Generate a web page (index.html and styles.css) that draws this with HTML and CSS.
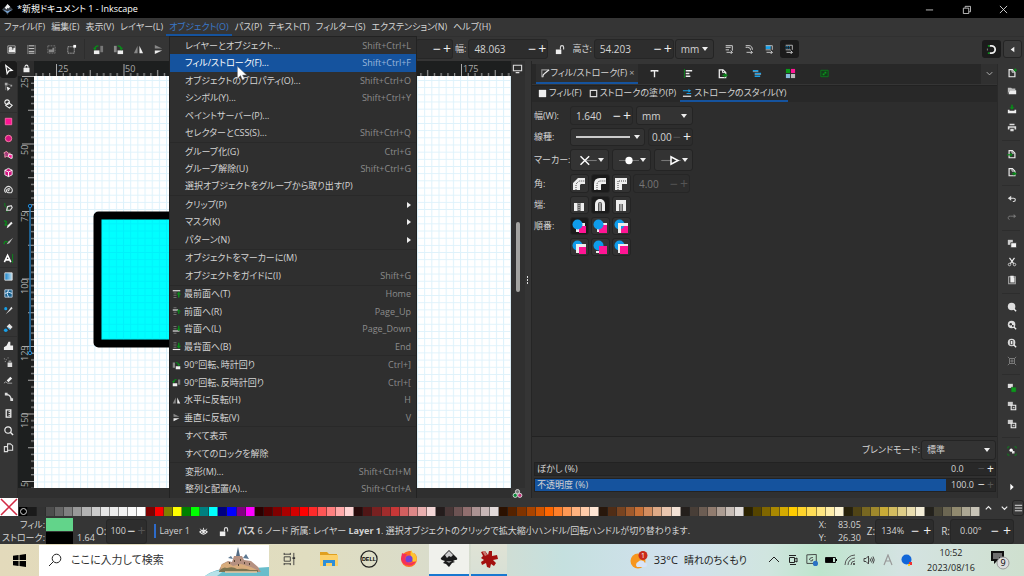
FILE: index.html
```html
<!DOCTYPE html>
<html lang="ja">
<head>
<meta charset="utf-8">
<title>*新規ドキュメント 1 - Inkscape</title>
<link rel="stylesheet" href="styles.css">
</head>
<body>
<svg class="defs" aria-hidden="true">
  <symbol id="selall" viewBox="0 0 12 12"><path d="M2 2h8v8H2z" fill="none" stroke="#aaa"/><path d="M3 6h5V4h2v5H3z" fill="#eee"/><circle cx="5" cy="5" r="2" fill="#ddd"/></symbol>
  <symbol id="sellayers" viewBox="0 0 12 12"><path d="M2 1v10M10 1v10" stroke="#888"/><path d="M3 2h6M3 5h6M3 8h6M3 10h6" stroke="#ddd"/></symbol>
  <symbol id="desel" viewBox="0 0 12 12"><path d="M2 2h8v8H2z" fill="none" stroke="#777" stroke-dasharray="2 1"/><path d="M3 6h4V4h2v5H3z" fill="#888"/></symbol>
  <symbol id="selbox" viewBox="0 0 12 12"><path d="M2 3h7v7H2z" fill="none" stroke="#ddd" stroke-dasharray="1 1"/><path d="M8 1h3v3H8z" fill="#fff"/></symbol>
  <symbol id="rotl" viewBox="0 0 12 12"><path d="M1 7h6v4H1z" fill="#eee"/><path d="M8 2h3v7H8z" fill="#777"/><path d="M2 6q0-4 4-4" fill="none" stroke="#0a8a1a" stroke-width="1.5"/><path d="M0 4h4l-2 3z" fill="#0a8a1a"/></symbol>
  <symbol id="rotr" viewBox="0 0 12 12"><path d="M5 7h6v4H5z" fill="#eee"/><path d="M1 2h3v7H1z" fill="#888"/><path d="M5 2q4 0 4 4" fill="none" stroke="#0a8a1a" stroke-width="1.5"/><path d="M7 4h4l-2 3z" fill="#0a8a1a"/></symbol>
  <symbol id="fliph" viewBox="0 0 12 12"><path d="M5 2v8H1z" fill="#888"/><path d="M7 2v8h4z" fill="#eee"/></symbol>
  <symbol id="flipv" viewBox="0 0 12 12"><path d="M2 5h8L2 1z" fill="#888"/><path d="M2 7h8l-8 4z" fill="#eee"/></symbol>
  <symbol id="top" viewBox="0 0 12 12"><path d="M1 1h10" stroke="#eee" stroke-width="1.5"/><path d="M2 4h4M2 7h4M2 10h4" stroke="#888"/><path d="M9 10V5" stroke="#0a8a1a" stroke-width="2"/><path d="M6 6h6L9 2z" fill="#0a8a1a"/></symbol>
  <symbol id="raise" viewBox="0 0 12 12"><path d="M1 4h7" stroke="#eee" stroke-width="1.5"/><path d="M2 1h4M2 7h4M2 10h4" stroke="#888"/><path d="M9 9V6" stroke="#0a8a1a" stroke-width="2"/><path d="M6 6h6L9 3z" fill="#0a8a1a"/></symbol>
  <symbol id="lower" viewBox="0 0 12 12"><path d="M1 8h9" stroke="#eee" stroke-width="1.5"/><path d="M2 2h4M2 5h4M2 11h4" stroke="#888"/><path d="M9 1v5" stroke="#0a8a1a" stroke-width="2"/><path d="M6 5h6L9 8z" fill="#0a8a1a"/></symbol>
  <symbol id="bottom" viewBox="0 0 12 12"><path d="M1 10h10" stroke="#eee" stroke-width="1.5"/><path d="M2 1h4M2 4h4M2 7h4" stroke="#888"/><path d="M9 1v5" stroke="#0a8a1a" stroke-width="2"/><path d="M6 5h6L9 9z" fill="#0a8a1a"/></symbol>
  <symbol id="arrow" viewBox="0 0 12 12"><path d="M3 1.500l7 5.500-3.500.5-2 3z" fill="#333" stroke="#fff" stroke-width="1.300"/></symbol>
  <symbol id="node" viewBox="0 0 12 12"><path d="M2 2h3v3H2zM8 4h2v2H8z" fill="#aaa"/><path d="M4 6l4 2-3 3z" fill="#eee"/><path d="M5 3l4 2M3 5v5" stroke="#777"/></symbol>
  <symbol id="builder" viewBox="0 0 12 12"><circle cx="4.500" cy="4.500" r="2.500" fill="none" stroke="#eee" stroke-width="1.200"/><path d="M6 5l4 3-3 3-4-3z" fill="none" stroke="#eee" stroke-width="1.200"/></symbol>
  <symbol id="rect" viewBox="0 0 12 12"><path d="M2.500 2.500h7v7h-7z" fill="#ff1594" stroke="#f6a"/></symbol>
  <symbol id="circ" viewBox="0 0 12 12"><circle cx="6" cy="6" r="3.500" fill="#d41480" stroke="#f8a"/></symbol>
  <symbol id="star" viewBox="0 0 12 12"><path d="M4 1.500l1.500 2 2.500 0-1.500 2 .5 2.500-3-1-2 1 0-3-1-2z" fill="#a2387a" stroke="#e9a"/><path d="M6 5h4v4H8L6 7z" fill="#ff1594" stroke="#eee"/></symbol>
  <symbol id="cube" viewBox="0 0 12 12"><path d="M6 1.500l4 2v5l-4 2-4-2v-5z" fill="#d41480" stroke="#eee"/><path d="M2 3.500l4 2 4-2M6 5.500v5" fill="none" stroke="#fff"/></symbol>
  <symbol id="spiral" viewBox="0 0 12 12"><path d="M3 9.500a4 4 0 1 1 6 0H6a2.200 2.200 0 1 1 1.800-3.500" fill="none" stroke="#ddd" stroke-width="1.200"/><circle cx="6" cy="7" r="1" fill="#ddd"/></symbol>
  <symbol id="pen" viewBox="0 0 12 12"><path d="M2 1q-1 4 2 5t0 5" fill="none" stroke="#0a8a1a"/><path d="M4 9l1-4 4-1 1 2-2 3z" fill="none" stroke="#ddd" stroke-width="1.300"/></symbol>
  <symbol id="pencil" viewBox="0 0 12 12"><path d="M1 2q4 0 2 3t2 1" fill="none" stroke="#0a8a1a" stroke-width="1.500"/><path d="M4 10l1-3 4-4 1.500 1.500L6 9z" fill="#eee"/></symbol>
  <symbol id="callig" viewBox="0 0 12 12"><path d="M1 9q1-5 4-2" fill="none" stroke="#0a8a1a" stroke-width="1.500"/><path d="M4 9l2-3 5-4-4 6z" fill="#bbb"/></symbol>
  <symbol id="typo" viewBox="0 0 12 12"><path d="M1.500 10L5 2.500 8.500 10M3 7.500h4" fill="none" stroke="#fff" stroke-width="1.700"/><path d="M10.500 1v10" stroke="#0a8a1a"/></symbol>
  <linearGradient id="blu"><stop stop-color="#1480c8"/><stop offset="1" stop-color="#bde"/></linearGradient>
  <symbol id="grad" viewBox="0 0 12 12"><path d="M2 2h8v8H2z" fill="url(#blu)" stroke="#ddd"/></symbol>
  <symbol id="mesh" viewBox="0 0 12 12"><path d="M2 2h8v8H2z" fill="#15618f" stroke="#bcd"/><path d="M6 2q-3 4 0 8M2 6q4-3 8 0" fill="none" stroke="#def"/></symbol>
  <symbol id="drop" viewBox="0 0 12 12"><circle cx="3" cy="4" r="1.700" fill="#18a0e8"/><path d="M3 10l4-5 2-3 1.500 1.500L8 6z" fill="#ddd"/></symbol>
  <symbol id="bucket" viewBox="0 0 12 12"><circle cx="3" cy="9" r="2" fill="#18a0e8"/><path d="M4 5l3-3 3.500 3.500-3 3z" fill="#e4e4e4"/><path d="M5 6l3 2" stroke="#18a0e8"/></symbol>
  <symbol id="tweak" viewBox="0 0 12 12"><path d="M1 11V8l3-2 2-4h2v4h3v5z" fill="#eee"/></symbol>
  <symbol id="spray" viewBox="0 0 12 12"><path d="M5 6h5v5H5zM6 4h3v1H6z" fill="#ddd"/><path d="M1 2h1M3 3h1M2 5h1M5 1h1" stroke="#aaa"/></symbol>
  <symbol id="eraser" viewBox="0 0 12 12"><path d="M4 7l4-4 2 2-4 4z" fill="#eee"/><path d="M1 10q2-3 4 0h5" fill="none" stroke="#aaa"/></symbol>
  <symbol id="connect" viewBox="0 0 12 12"><path d="M2 2h3v3H2zM8 8h3v3H8z" fill="#ddd"/><path d="M4 4q4 0 5 5" fill="none" stroke="#ddd" stroke-width="1.500"/></symbol>
  <symbol id="measure" viewBox="0 0 12 12"><path d="M3.500 2h5v8h-5z" fill="none" stroke="#eee" stroke-width="1.400"/><path d="M6 4h2M6 6h2M6 8h2" stroke="#eee"/></symbol>
  <symbol id="zoom" viewBox="0 0 12 12"><circle cx="5.500" cy="5.500" r="3.500" fill="none" stroke="#eee" stroke-width="1.300"/><path d="M8 8l3 3" stroke="#eee" stroke-width="1.500"/></symbol>
  <symbol id="pages" viewBox="0 0 12 12"><path d="M1.500 5H5v5.500H1.500zM5 2h3l2.500 2v5H5z" fill="none" stroke="#ddd" stroke-width="1.200"/></symbol>
  <symbol id="lock" viewBox="0 0 12 12"><path d="M2 5h8v6H2z" fill="#eee"/><path d="M4 5V3.500a2 2 0 0 1 4 0V5" fill="none" stroke="#eee" stroke-width="1.400"/></symbol>
  <symbol id="unlock" viewBox="0 0 12 12"><path d="M2 6h6v5H2z" fill="#eee"/><path d="M7 6V3.500a1.700 1.700 0 0 1 3.500 0V6" fill="none" stroke="#ddd" stroke-width="1.200"/></symbol>
  <symbol id="doc" viewBox="0 0 12 12"><path d="M2.500 2h4l3 3v5.500h-7z" fill="none" stroke="#eee" stroke-width="1.400"/><path d="M6 2v3h3" fill="none" stroke="#eee"/></symbol>
  <symbol id="docnew" viewBox="0 0 12 12"><use href="#doc"/><path d="M8 2.500h4M10 .5v4" stroke="#0a8a1a" stroke-width="1.500"/></symbol>
  <symbol id="open" viewBox="0 0 12 12"><path d="M1 10V2h4l1 1h4v2H3z" fill="#bbb"/><path d="M3 5h8v5H2z" fill="#eee"/></symbol>
  <symbol id="save" viewBox="0 0 12 12"><path d="M1 7h2v1h6V7h2v4H1z" fill="#eee"/><path d="M6 1v4" stroke="#0a8a1a" stroke-width="2"/><path d="M3 4h6L6 7z" fill="#0a8a1a"/></symbol>
  <symbol id="print" viewBox="0 0 12 12"><path d="M3 2h6v2H3zM1 5h10v4H9V7H3v2H1zM4 8h4v3H4z" fill="#ddd"/></symbol>
  <symbol id="import" viewBox="0 0 12 12"><use href="#doc"/><path d="M0 7h5" stroke="#0a8a1a" stroke-width="1.500"/><path d="M4 4.500v5l3-2.500z" fill="#0a8a1a"/></symbol>
  <symbol id="export" viewBox="0 0 12 12"><use href="#doc"/><path d="M6 8h3" stroke="#0a8a1a" stroke-width="1.500"/><path d="M8 5.500v5l4-2.500z" fill="#0a8a1a"/></symbol>
  <symbol id="undo" viewBox="0 0 12 12"><path d="M3 5h5a2 2 0 0 1 0 4H7" fill="none" stroke="#ddd" stroke-width="1.300"/><path d="M1 5l4-3v6z" fill="#ddd"/></symbol>
  <symbol id="redo" viewBox="0 0 12 12"><path d="M9 5H4a2 2 0 0 0-1 4" fill="none" stroke="#777" stroke-width="1.200"/><path d="M11 5L8 2.500v5z" fill="#777"/></symbol>
  <symbol id="copy" viewBox="0 0 12 12"><path d="M1 1h6v6H1z" fill="#ccc"/><path d="M4.500 4.500h7v6h-7z" fill="#f4f4f4" stroke="#333"/></symbol>
  <symbol id="cut" viewBox="0 0 12 12"><path d="M3 1l5 7M9 1L4 8" stroke="#eee" stroke-width="1.400"/><circle cx="3" cy="9" r="1.500" fill="none" stroke="#ddd"/><circle cx="9" cy="9" r="1.500" fill="none" stroke="#ddd"/></symbol>
  <symbol id="paste" viewBox="0 0 12 12"><path d="M2 2h8v8.500H2z" fill="none" stroke="#aaa" stroke-width="1.300"/><path d="M4 1h4v2h1v6H4z" fill="#eee"/></symbol>
  <symbol id="zsel" viewBox="0 0 12 12"><circle cx="5.500" cy="5.500" r="4.500" fill="#ddd"/><path d="M8 8l3 3" stroke="#eee" stroke-width="1.600"/></symbol>
  <symbol id="zdraw" viewBox="0 0 12 12"><use href="#zsel"/><circle cx="4.500" cy="5" r="1.500" fill="#333"/><path d="M6 6h2v2H6z" fill="#333"/></symbol>
  <symbol id="zpage" viewBox="0 0 12 12"><use href="#zsel"/><path d="M4 3h3v5H4z" fill="#eee" stroke="#333"/></symbol>
  <symbol id="zcenter" viewBox="0 0 12 12"><path d="M1 1l2 2M11 1L9 3M1 11l2-2M11 11L9 9M3 3h6v6H3zM6 4v4M4 6h4" fill="none" stroke="#888"/></symbol>
  <symbol id="dup" viewBox="0 0 12 12"><path d="M1 1h6v5H1z" fill="#ddd"/><path d="M5 5h6v6H5z" fill="#0a9a1a" stroke="#333" stroke-width=".5"/></symbol>
  <symbol id="clone" viewBox="0 0 12 12"><path d="M1 1h6v5H1z" fill="#ccc"/><path d="M5 5h5.500v5.500H5z" fill="#444" stroke="#eee" stroke-width="1.300"/><path d="M7 8h2" stroke="#fff"/></symbol>
  <symbol id="group" viewBox="0 0 12 12"><path d="M1 3V1h2M9 1h2v2M1 9v2h2M9 11h2V9" fill="none" stroke="#0a8a1a"/><circle cx="5" cy="5" r="2" fill="#fff"/><path d="M6 6h3v3H6z" fill="#ddd"/></symbol>
  <symbol id="scale1" viewBox="0 0 12 12"><path d="M2 2h8v6M2 4h6M2 7h4" fill="none" stroke="#ccc" stroke-width="1.200"/><path d="M3 10h7M8 8l2 2-2 2" stroke="#ddd" fill="none"/></symbol>
  <symbol id="scale2" viewBox="0 0 12 12"><path d="M2 2h4q4 0 4 5M2 4h2q4 0 4 3" fill="none" stroke="#ccc" stroke-width="1.200"/><path d="M3 10h7M8 8l2 2-2 2" stroke="#ddd" fill="none"/></symbol>
  <symbol id="scale3" viewBox="0 0 12 12"><path d="M2 2h6v4H2z" fill="#18a0e8"/><path d="M2 2h8v5M2 7h6" stroke="#ccc" fill="none"/><path d="M3 10h7M8 8l2 2-2 2" stroke="#ddd" fill="none"/></symbol>
  <symbol id="scale4" viewBox="0 0 12 12"><path d="M2 3h6M2 5h6" stroke="#18a0e8" stroke-dasharray="1 1"/><path d="M2 1.500h8V7M2 7h6" stroke="#ccc" fill="none"/><path d="M3 10h7M8 8l2 2-2 2" stroke="#ddd" fill="none"/></symbol>
  <symbol id="snap" viewBox="0 0 12 12"><path d="M4 2h2a4 4 0 0 1 0 8H4" fill="none" stroke="#eee" stroke-width="2"/><path d="M2 1h2v2H2zM2 9h2v2H2z" fill="#0a8a1a"/><path d="M1 5h1v2H1z" fill="#888"/></symbol>
  <symbol id="fillstroke" viewBox="0 0 12 12"><path d="M2 10V2h7" fill="none" stroke="#999" stroke-width="1.200"/><path d="M3 10q0-3 2-4l5-4" fill="none" stroke="#eee" stroke-width="1.300"/></symbol>
  <symbol id="tee" viewBox="0 0 12 12"><path d="M2.500 4V3h7v1M6 3v7" fill="none" stroke="#eee" stroke-width="1.500"/></symbol>
  <symbol id="align" viewBox="0 0 12 12"><path d="M1.500 1v10" stroke="#0a8a1a"/><path d="M3 3h7M3 6h4M3 9h5" stroke="#eee" stroke-width="1.700"/></symbol>
  <symbol id="layers" viewBox="0 0 12 12"><path d="M2 3h6M4 6h7M4 9h6" stroke="#18a0e8" stroke-width="1.500"/><path d="M2 4h6M4 7h7" stroke="#ccc" stroke-width=".6"/></symbol>
  <symbol id="swat" viewBox="0 0 12 12"><path d="M1 1h4.500v4.500H1z" fill="#0a9a1a"/><path d="M6.500 1H11v4.500H6.500z" fill="#ff1594"/><path d="M1 6.500h4.500V11H1z" fill="#8bd"/><path d="M6.500 6.500H11V11H6.500z" fill="#bbb"/></symbol>
  <symbol id="trace" viewBox="0 0 12 12"><path d="M2 2.500h8v7H2z" fill="#143a1c" stroke="#0a7a1a"/><path d="M4 6h2v2H4zM6 4h2v2H6z" fill="#0a9a1a"/></symbol>
  <symbol id="ststyle" viewBox="0 0 12 12"><path d="M1 3h7M5 6h5" stroke="#18a0e8" stroke-width="1.300"/><path d="M7 1l3 2-3 2z" fill="#18a0e8"/><path d="M1 9h9" stroke="#eee" stroke-width="1.300"/></symbol>
  <symbol id="joinb" viewBox="0 0 14 14"><path d="M1 13V6l5-5h7v6H9L8 8v5z" fill="#eee"/><path d="M4 13V7l3-3h6" fill="none" stroke="#444" stroke-dasharray="1 1"/></symbol>
  <symbol id="joinr" viewBox="0 0 14 14"><path d="M1 13V7q0-6 6-6h6v6H9Q8 7 8 8v5z" fill="#eee"/><path d="M4 13V8q0-4 4-4h5" fill="none" stroke="#444" stroke-dasharray="1 1"/></symbol>
  <symbol id="joinm" viewBox="0 0 14 14"><path d="M1 13V1h12v6H8v6z" fill="#eee"/><path d="M4 13V4h9" fill="none" stroke="#444" stroke-dasharray="1 1"/></symbol>
  <symbol id="capb" viewBox="0 0 14 14"><path d="M2 5h3v8H2zM9 5h3v8H9z" fill="#eee"/><path d="M5 5h4v8H5z" fill="#999"/><path d="M7 4v9" stroke="#222" stroke-dasharray="1 1"/></symbol>
  <symbol id="capr" viewBox="0 0 14 14"><path d="M2 13V6a5 5 0 0 1 10 0v7z" fill="#eee"/><path d="M5 13V6a2 2 0 0 1 4 0v7z" fill="#555"/><path d="M7 5v8" stroke="#eee"/></symbol>
  <symbol id="caps" viewBox="0 0 14 14"><path d="M2 13V2h10v11z" fill="#eee"/><path d="M5 13V6h4v7z" fill="#666"/><path d="M7 5v8" stroke="#ddd"/></symbol>
  <symbol id="o1" viewBox="0 0 14 14"><path d="M9 4h4v4H9zM4 9h4v4H4z" fill="#eee"/><path d="M7 7h7v7H7z" fill="#ff1594"/><circle cx="5.500" cy="5.500" r="5" fill="#0f9bea"/></symbol>
  <symbol id="o2" viewBox="0 0 14 14"><path d="M4 4h10v9H4z" fill="#eee"/><path d="M6 6h8v8H6z" fill="#ff1594"/><circle cx="5.500" cy="5.500" r="5" fill="#0f9bea"/></symbol>
  <symbol id="o3" viewBox="0 0 14 14"><path d="M7 7h7v7H7z" fill="#ff1594"/><circle cx="5.500" cy="5.500" r="5" fill="#0f9bea"/><path d="M4 4h10v3H7v7H4z" fill="#eee"/></symbol>
  <symbol id="o4" viewBox="0 0 14 14"><circle cx="5.500" cy="5.500" r="5" fill="#0f9bea"/><path d="M4 4h10v9H4z" fill="#eee"/><path d="M7 7h7v7H7z" fill="#ff1594"/></symbol>
  <symbol id="o5" viewBox="0 0 14 14"><circle cx="5.500" cy="5.500" r="5" fill="#0f9bea"/><path d="M3 11h3v2H3z" fill="#eee"/><path d="M6 6h8v8H6z" fill="#ff1594"/></symbol>
  <symbol id="o6" viewBox="0 0 14 14"><circle cx="5.500" cy="5.500" r="5" fill="#0f9bea"/><path d="M4 4h10v9H4z" fill="#eee"/><path d="M6 6h8v8H6z" fill="#ff1594"/></symbol>
</svg>

<header class="titlebar">
  <svg class="logo" viewBox="0 0 12 12"><path d="M6 0l6 6-2 2-2 0-2 4-2-3-2-1-2-2z" fill="#3a4048"/><path d="M6 0l3 3-2 2-1-1-1 2-2-2z" fill="#eee"/><path d="M1 6l5 2 5-2-5 4z" fill="#79a7d8"/></svg>
  <h1>*新規ドキュメント 1 - Inkscape</h1>
  <div class="winbtns">
    <button aria-label="最小化"><svg viewBox="0 0 10 10"><path d="M1 5.500h8" stroke="#ccc"/></svg></button>
    <button aria-label="元に戻す"><svg viewBox="0 0 10 10"><path d="M1.500 3.500h6v6h-6zM3.500 3V1.500h6v6H8" fill="none" stroke="#ccc"/></svg></button>
    <button aria-label="閉じる"><svg viewBox="0 0 10 10"><path d="M1 1l8 8M9 1L1 9" stroke="#ddd"/></svg></button>
  </div>
</header>

<nav class="menubar">
  <button>ファイル(F)</button><button>編集(E)</button><button>表示(V)</button><button>レイヤー(L)</button><button class="open">オブジェクト(O)</button><button>パス(P)</button><button>テキスト(T)</button><button>フィルター(S)</button><button>エクステンション(N)</button><button>ヘルプ(H)</button>
</nav>

<div class="workspace">
  <div class="toolbar">
    <div class="tb-left">
      <button aria-label="すべて選択"><svg><use href="#selall"/></svg></button><button aria-label="全レイヤー選択"><svg><use href="#sellayers"/></svg></button><button aria-label="選択解除"><svg><use href="#desel"/></svg></button><button aria-label="選択ボックス"><svg><use href="#selbox"/></svg></button>
      <i class="vsep"></i>
      <button aria-label="反時計回り"><svg><use href="#rotl"/></svg></button><button aria-label="時計回り"><svg><use href="#rotr"/></svg></button><button aria-label="水平反転"><svg><use href="#fliph"/></svg></button><button aria-label="垂直反転"><svg><use href="#flipv"/></svg></button>
    </div>
    <span class="spin tail"><button>−</button><button>+</button></span>
    <label for="w">幅:</label><span class="spin dim"><input id="w" value="48.063"><button>−</button><button>+</button></span>
    <button class="mid" aria-label="縦横比"><svg><use href="#unlock"/></svg></button>
    <label for="h">高さ:</label><span class="spin dim"><input id="h" value="54.203"><button>−</button><button>+</button></span>
    <span class="drop unit"><select aria-label="単位"><option>mm</option></select></span>
    <div class="scales"><button aria-label="線幅"><svg><use href="#scale1"/></svg></button><button aria-label="角丸"><svg><use href="#scale2"/></svg></button><button aria-label="グラデーション"><svg><use href="#scale3"/></svg></button><button class="on" aria-label="パターン"><svg><use href="#scale4"/></svg></button></div>
    <div class="tb-right"><button class="on" aria-label="スナップ"><svg><use href="#snap"/></svg></button><button class="raised" aria-label="スナップ設定"><svg viewBox="0 0 12 12"><path d="M8 3v6L4 6z" fill="#eee"/></svg></button></div>
  </div>

  <main class="main">
    <aside class="toolbox">
      <button class="on" aria-label="選択"><svg><use href="#arrow"/></svg></button><button aria-label="ノード"><svg><use href="#node"/></svg></button><button aria-label="シェイプビルダー"><svg><use href="#builder"/></svg></button><i></i>
      <button aria-label="矩形"><svg><use href="#rect"/></svg></button><button aria-label="円"><svg><use href="#circ"/></svg></button><button aria-label="星形"><svg><use href="#star"/></svg></button><button aria-label="3Dボックス"><svg><use href="#cube"/></svg></button><button aria-label="らせん"><svg><use href="#spiral"/></svg></button><i></i>
      <button aria-label="ペン"><svg><use href="#pen"/></svg></button><button aria-label="鉛筆"><svg><use href="#pencil"/></svg></button><button aria-label="カリグラフィ"><svg><use href="#callig"/></svg></button><button aria-label="テキスト"><svg><use href="#typo"/></svg></button><i></i>
      <button aria-label="グラデーション"><svg><use href="#grad"/></svg></button><button aria-label="メッシュ"><svg><use href="#mesh"/></svg></button><button aria-label="スポイト"><svg><use href="#drop"/></svg></button><button aria-label="塗りつぶし"><svg><use href="#bucket"/></svg></button><i></i>
      <button aria-label="微調整"><svg><use href="#tweak"/></svg></button><button aria-label="スプレー"><svg><use href="#spray"/></svg></button><button aria-label="消しゴム"><svg><use href="#eraser"/></svg></button><button aria-label="コネクター"><svg><use href="#connect"/></svg></button>
      <button aria-label="計測"><svg><use href="#measure"/></svg></button><button aria-label="ズーム"><svg><use href="#zoom"/></svg></button><button aria-label="ページ"><svg><use href="#pages"/></svg></button>
    </aside>

    <section class="editor">
      <button class="guide-lock" aria-label="ガイドをロック"><svg><use href="#lock"/></svg></button>
      <svg class="ruler-h" aria-hidden="true">
        <defs><pattern id="th" width="67.500" height="15" x="22" patternUnits="userSpaceOnUse"><path d="M.5 3v12M34.200 9v6M7.200 12v3M14 12v3M20.700 12v3M27.500 12v3M41 12v3M47.700 12v3M54.500 12v3M61.200 12v3" stroke="#aaa"/></pattern></defs>
        <rect width="100%" height="100%" fill="url(#th)"/>
        <text x="24" y="11">25</text><text x="91" y="11">50</text><text x="429" y="11">175</text>
      </svg>
      <button class="display" aria-label="表示モード"><svg viewBox="0 0 12 12"><path d="M1.500 2.500h9v6h-9zM4 10.500h4" fill="none" stroke="#ddd" stroke-width="1.200"/></svg></button>
      <svg class="ruler-v" aria-hidden="true">
        <defs><pattern id="tv" width="16" height="67.500" patternUnits="userSpaceOnUse"><path d="M4 .5h12M10 34.200h6M13 7.200h3M13 14h3M13 20.700h3M13 27.500h3M13 41h3M13 47.700h3M13 54.500h3M13 61.200h3" stroke="#aaa"/></pattern></defs>
        <rect width="100%" height="100%" fill="url(#tv)"/>
        <g><text transform="translate(10 12) rotate(-90)">25</text><text transform="translate(10 79) rotate(-90)">50</text><text transform="translate(10 146) rotate(-90)">75</text><text transform="translate(10 218) rotate(-90)">100</text><text transform="translate(10 285) rotate(-90)">125</text><text transform="translate(10 352) rotate(-90)">150</text><text transform="translate(10 411) rotate(-90)">5</text></g>
        <path d="M12 131v147" stroke="#1f79b8" stroke-width="1.500"/><circle cx="12" cy="130" r="1.700" fill="#123" stroke="#1f8ad8"/><circle cx="12" cy="277" r="1.700" fill="#123" stroke="#1f8ad8"/>
      </svg>
      <svg class="canvas" aria-label="キャンバス">
        <defs><pattern id="grid" width="7.170" height="7.170" x="3" y="4" patternUnits="userSpaceOnUse"><path d="M0 .5h7.200M.5 0v7.200" stroke="#0098e0" stroke-opacity=".13"/></pattern></defs>
        <rect width="100%" height="100%" fill="#fff"/>
        <rect width="100%" height="100%" fill="url(#grid)"/>
        <rect x="63.500" y="139.500" width="120" height="128" rx="1" fill="#0ff" stroke="#000" stroke-width="8" stroke-linejoin="round"/>
        <rect x="67" y="143" width="113" height="121" fill="url(#grid)"/>
      </svg>
      <div class="vscroll"><i></i></div>
      <div class="hscroll"></div>
      <button class="cms" aria-label="カラー管理"><svg viewBox="0 0 12 12"><circle cx="6" cy="4" r="2.300" fill="#777" stroke="#ddd"/><circle cx="3.500" cy="8" r="2.300" fill="#0a8a3a" stroke="#ddd"/><circle cx="8.500" cy="8" r="2.300" fill="#c2307a" stroke="#ddd"/></svg></button>
    </section>

    <div class="splitter"><i></i><i></i><i></i></div>

    <section class="dock">
      <div class="tabs">
        <button class="active"><svg><use href="#fillstroke"/></svg>フィル/ストローク(F)<b>×</b></button>
        <button aria-label="テキスト"><svg><use href="#tee"/></svg></button><button aria-label="整列"><svg><use href="#align"/></svg></button><button aria-label="書き出し"><svg><use href="#export"/></svg></button><button aria-label="レイヤー"><svg><use href="#layers"/></svg></button><button aria-label="スウォッチ"><svg><use href="#swat"/></svg></button><button aria-label="トレース"><svg><use href="#trace"/></svg></button>
        <button class="more" aria-label="その他"><svg viewBox="0 0 12 12"><path d="M3 4.500l3 3 3-3" fill="none" stroke="#bbb"/></svg></button>
      </div>
      <div class="subtabs">
        <button><svg viewBox="0 0 12 12"><path d="M2 2h8v8H2z" fill="#eee"/></svg>フィル(F)</button>
        <button><svg viewBox="0 0 12 12"><path d="M2.500 2.500h7v7h-7z" fill="none" stroke="#ddd" stroke-width="1.300"/></svg>ストロークの塗り(P)</button>
        <button class="active"><svg><use href="#ststyle"/></svg>ストロークのスタイル(Y)</button>
      </div>
      <form class="stroke">
        <label for="sw">幅(W):</label>
        <div><span class="spin sw"><input id="sw" value="1.640"><button type="button">−</button><button type="button">+</button></span><span class="drop su"><select aria-label="線幅の単位"><option>mm</option></select></span></div>
        <span>線種:</span>
        <div><button type="button" class="combo dash" aria-label="線種"><svg viewBox="0 0 54 8"><path d="M0 4h54" stroke="#fff" stroke-width="1.300"/></svg></button><span class="spin so"><input aria-label="オフセット" value="0.00"><button type="button" disabled>−</button><button type="button">+</button></span></div>
        <span>マーカー:</span>
        <div class="markers"><button type="button" class="combo" aria-label="始点マーカー"><svg viewBox="0 0 18 12"><path d="M8 6h10" stroke="#777"/><path d="M3 2l8 8M11 2l-8 8" stroke="#fff" stroke-width="1.300"/></svg></button><button type="button" class="combo" aria-label="中間マーカー"><svg viewBox="0 0 22 12"><path d="M0 6h22" stroke="#777"/><circle cx="11" cy="6" r="4" fill="#fff"/></svg></button><button type="button" class="combo" aria-label="終点マーカー"><svg viewBox="0 0 18 12"><path d="M0 6h18" stroke="#777"/><path d="M9 2.500v7L15.500 6z" fill="#2d2d2d" stroke="#fff" stroke-width="1.400"/></svg></button></div>
        <span>角:</span>
        <div class="opts"><button type="button" aria-label="ベベル"><svg><use href="#joinb"/></svg></button><button type="button" class="on" aria-label="丸"><svg><use href="#joinr"/></svg></button><button type="button" aria-label="留め継ぎ"><svg><use href="#joinm"/></svg></button><span class="spin off"><input aria-label="マイター上限" value="4.00" disabled><button type="button" disabled>−</button><button type="button" disabled>+</button></span></div>
        <span>端:</span>
        <div class="opts"><button type="button" aria-label="バット"><svg><use href="#capb"/></svg></button><button type="button" class="on" aria-label="丸型"><svg><use href="#capr"/></svg></button><button type="button" aria-label="四角"><svg><use href="#caps"/></svg></button></div>
        <span>順番:</span>
        <div class="opts"><button type="button" class="on" aria-label="順番1"><svg><use href="#o1"/></svg></button><button type="button" aria-label="順番2"><svg><use href="#o2"/></svg></button><button type="button" aria-label="順番3"><svg><use href="#o3"/></svg></button></div>
        <span></span>
        <div class="opts"><button type="button" aria-label="順番4"><svg><use href="#o4"/></svg></button><button type="button" aria-label="順番5"><svg><use href="#o5"/></svg></button><button type="button" aria-label="順番6"><svg><use href="#o6"/></svg></button></div>
      </form>
      <div class="compose">
        <div class="blend"><label for="bm">ブレンドモード:</label><span class="drop"><select id="bm"><option>標準</option></select></span></div>
        <div class="bar"><label for="blur">ぼかし (%)</label><input id="blur" value="0.0"><button disabled>−</button><button>+</button></div>
        <div class="bar full"><label for="opa">不透明度 (%)</label><input id="opa" value="100.0"><button>−</button><button disabled>+</button></div>
      </div>
    </section>

    <aside class="commands">
      <button aria-label="新規"><svg><use href="#docnew"/></svg></button><button aria-label="開く"><svg><use href="#open"/></svg></button><button aria-label="保存"><svg><use href="#save"/></svg></button><button aria-label="印刷"><svg><use href="#print"/></svg></button><i></i>
      <button aria-label="インポート"><svg><use href="#import"/></svg></button><button aria-label="エクスポート"><svg><use href="#export"/></svg></button><i></i>
      <button aria-label="元に戻す"><svg><use href="#undo"/></svg></button><button aria-label="やり直す"><svg><use href="#redo"/></svg></button><i></i>
      <button aria-label="コピー"><svg><use href="#copy"/></svg></button><button aria-label="切り取り"><svg><use href="#cut"/></svg></button><button aria-label="貼り付け"><svg><use href="#paste"/></svg></button><i></i>
      <button aria-label="選択ズーム"><svg><use href="#zsel"/></svg></button><button aria-label="描画ズーム"><svg><use href="#zdraw"/></svg></button><button aria-label="ページズーム"><svg><use href="#zpage"/></svg></button><button aria-label="中央"><svg><use href="#zcenter"/></svg></button><i></i>
      <button aria-label="複製"><svg><use href="#dup"/></svg></button><button aria-label="クローン"><svg><use href="#clone"/></svg></button><button aria-label="リンク解除"><svg><use href="#clone"/></svg></button><i></i>
      <button aria-label="グループ化"><svg><use href="#group"/></svg></button>
      <button class="expand" aria-label="さらに表示"><svg viewBox="0 0 12 12"><path d="M4 2v8l4-4z" fill="#fff"/></svg></button>
    </aside>
  </main>

  <div class="popup" role="menu">
    <button>レイヤーとオブジェクト...<kbd>Shift+Ctrl+L</kbd></button>
    <button class="hover">フィル/ストローク(F)...<kbd>Shift+Ctrl+F</kbd></button>
    <button>オブジェクトのプロパティ(O)...<kbd>Shift+Ctrl+O</kbd></button>
    <button>シンボル(Y)...<kbd>Shift+Ctrl+Y</kbd></button>
    <button>ペイントサーバー(P)...</button>
    <button>セレクターとCSS(S)...<kbd>Shift+Ctrl+Q</kbd></button>
    <hr>
    <button>グループ化(G)<kbd>Ctrl+G</kbd></button>
    <button>グループ解除(U)<kbd>Shift+Ctrl+G</kbd></button>
    <button>選択オブジェクトをグループから取り出す(P)</button>
    <hr>
    <button class="sub">クリップ(P)</button>
    <button class="sub">マスク(K)</button>
    <button class="sub">パターン(N)</button>
    <hr>
    <button>オブジェクトをマーカーに(M)</button>
    <button>オブジェクトをガイドに(I)<kbd>Shift+G</kbd></button>
    <hr>
    <button class="ic"><svg><use href="#top"/></svg>最前面へ(T)<kbd>Home</kbd></button>
    <button class="ic"><svg><use href="#raise"/></svg>前面へ(R)<kbd>Page_Up</kbd></button>
    <button class="ic"><svg><use href="#lower"/></svg>背面へ(L)<kbd>Page_Down</kbd></button>
    <button class="ic"><svg><use href="#bottom"/></svg>最背面へ(B)<kbd>End</kbd></button>
    <hr>
    <button class="ic"><svg><use href="#rotr"/></svg>90°回転、時計回り<kbd>Ctrl+]</kbd></button>
    <button class="ic"><svg><use href="#rotl"/></svg>90°回転、反時計回り<kbd>Ctrl+[</kbd></button>
    <button class="ic"><svg><use href="#fliph"/></svg>水平に反転(H)<kbd>H</kbd></button>
    <button class="ic"><svg><use href="#flipv"/></svg>垂直に反転(V)<kbd>V</kbd></button>
    <hr>
    <button>すべて表示</button>
    <button>すべてのロックを解除</button>
    <hr>
    <button>変形(M)...<kbd>Shift+Ctrl+M</kbd></button>
    <button>整列と配置(A)...<kbd>Shift+Ctrl+A</kbd></button>
  </div>
  <svg class="cursor" viewBox="0 0 10 16" aria-hidden="true"><path d="M.5.5v12l3-3 2 4.500 2-1-2-4H9.500z" fill="#fff" stroke="#888" stroke-width=".5"/></svg>
</div>

<div class="palette">
  <button class="none" aria-label="なし"><svg viewBox="0 0 18 18"><path d="M1 1l16 16M17 1L1 17" stroke="#d22b45" stroke-width="1.500"/></svg></button>
  <div class="swatches" id="swatches"></div>
  <div class="palbtns"><button aria-label="上へ"><svg viewBox="0 0 12 12"><path d="M3 7l3-3 3 3" fill="none" stroke="#eee" stroke-width="1.300"/></svg></button><button aria-label="下へ"><svg viewBox="0 0 12 12"><path d="M3 4l3 3 3-3" fill="none" stroke="#eee" stroke-width="1.300"/></svg></button><button class="raised" aria-label="パレット"><svg viewBox="0 0 12 12"><path d="M2 2.500h8M2 5.500h8M2 8.500h8" stroke="#eee"/></svg></button></div>
</div>

<footer class="status">
  <div class="style-lab"><span>フィル:</span><span>ストローク:</span></div>
  <div class="style-sw"><i class="f"></i><i class="s"></i></div>
  <span class="width">1.64</span>
  <label for="op">O:</label><span class="spin o"><input id="op" value="100"><button>−</button><button disabled>+</button></span>
  <button class="layer">Layer 1</button>
  <button aria-label="表示"><svg viewBox="0 0 12 12"><path d="M2 6.500q4-4 8 0-4 5-8 0z" fill="none" stroke="#eee" stroke-width="1.200"/><circle cx="6" cy="6.500" r="1.500" fill="#eee"/><path d="M2.500 3l1 1.500M6 2v2M9.500 3l-1 1.500" stroke="#ddd"/></svg></button>
  <button aria-label="ロック"><svg><use href="#unlock"/></svg></button>
  <p><b>パス</b> 6 ノード 所属: レイヤー <b>Layer 1</b>. 選択オブジェクトのクリックで拡大縮小ハンドル/回転ハンドルが切り替わります.</p>
  <dl><dt>X:</dt><dd>83.05</dd><dt>Y:</dt><dd>26.30</dd></dl>
  <label for="z">Z:</label><span class="spin z"><input id="z" value="134%"><button>−</button><button>+</button></span>
  <label for="r" class="rl">R:</label><span class="spin r"><input id="r" value="0.00°"><button>−</button><button>+</button></span>
</footer>

<div class="taskbar">
  <button class="start" aria-label="スタート"><svg viewBox="0 0 14 14"><path d="M0 2l6-1v5.500H0zM7 1l7-1v6.500H7zM0 7.500h6V13l-6-1zM7 7.500h7V14l-7-1z"/></svg></button>
  <label class="search"><svg class="mag" viewBox="0 0 14 14"><circle cx="8.500" cy="5.500" r="4.300" fill="none" stroke="#222"/><path d="M5.500 8.500L1 13" stroke="#222"/></svg><input placeholder="ここに入力して検索" aria-label="検索">
    <svg class="art" viewBox="0 0 64 31"><path d="M0 31q14-10 34-7l30-2v9z" fill="#69bdcb"/><path d="M0 31q8-6 20-6l-8 6z" fill="#b6e2e8"/><path d="M14 25l3-6 6-3 4 1 2-6h3l1-7 1 7h3l2 4 7 1 7 6 3 5z" fill="#b59080"/><path d="M33 2l2 9h-4z" fill="#526a83"/><path d="M23 13l3-2 2 3zM38 13l3-4 3 5z" fill="#5d7892"/><path d="M16 20l6-3 6 4 8-2 10 3 6 3H16z" fill="#d8ac7c"/><path d="M14 26q4-5 8-3 6-2 10 1 8-1 13 1l8 0v2H14z" fill="#7d7450"/><path d="M24 18h1M29 16h1M35 15h1M39 18h1M44 19h1M33 20h1" stroke="#543" stroke-width="2"/><path d="M20 27h32" stroke="#e9c9a0" stroke-width="1.500"/></svg></label>
  <div class="apps">
    <button aria-label="タスクビュー"><svg viewBox="0 0 16 16"><path d="M2 2.500h8M2 13.500h8M2.500 5.500h7v5h-7zM2.500 1v2M9.500 1v2M2.500 13v2M9.500 13v2M13.500 1v14" fill="none" stroke="#333"/><path d="M12 6h3v2h-3z" fill="#333"/></svg></button>
    <button aria-label="エクスプローラー"><svg viewBox="0 0 18 16"><path d="M0 1h7l2 2h8v4H0z" fill="#e0a020"/><path d="M0 4h18v11H0z" fill="#fcd068"/><path d="M3 15V9h12v6h-3v-3H6v3z" fill="#2f8fd8"/></svg></button>
    <button aria-label="Dell"><svg viewBox="0 0 20 20"><circle cx="10" cy="10" r="9" fill="none" stroke="#222" stroke-width="1.300"/><text x="10" y="12" text-anchor="middle" class="dell">DELL</text></svg></button>
    <button aria-label="Firefox"><svg viewBox="0 0 18 18"><path d="M9 1q-7 1-8 8a8 8 0 0 0 16 0q0-4-3-6l-1 2-2-4z" fill="#ff6a25"/><path d="M11 0q1 3 4 4 3 4 1 8-4 1-5-5-1-3 0-7z" fill="#ffc52e"/><path d="M2 3l2 1 3 0-2 4q1 5 6 5l5-2a8 8 0 0 1-15-2z" fill="#f4305b"/><circle cx="9" cy="9" r="3.600" fill="#7440d8"/></svg></button>
    <button class="cur" aria-label="Inkscape"><svg viewBox="0 0 18 18"><path d="M9 0l8 8q1 2-2 2l-2 1 2 1-3 1-3 4-3-3-3-1 2-2-3-1Q0 9 1 8z" fill="#1a1a1a"/><path d="M9 1l4 4-2 2-2-1-2 2-2-3z" fill="#ccc"/><path d="M6 11h6l-3 2z" fill="#888"/></svg></button>
    <button class="run" aria-label="アプリ"><svg viewBox="0 0 18 18"><path d="M1 2l4-1 3 4 1-4 3 0 0 5 5-1 1 4-5 1 3 3-2 3-3-2-1 4-3-1-1-4-4 2-1-3 3-2-3-2 2-2z" fill="#a3100f"/><path d="M2 1l3 0 2 4-2 1z" fill="#c87a70"/></svg></button>
  </div>
  <div class="weather"><svg viewBox="0 0 18 18"><circle cx="8" cy="10" r="7.500" fill="#f6961e"/><path d="M7 16a3 3 0 0 1 1-5 4 4 0 0 1 7 1 2 2 0 0 1 0 4z" fill="#d9e4f6"/><circle cx="13" cy="4.500" r="4.500" fill="#c92a1c"/><text x="13" y="7" text-anchor="middle" class="badge">1</text></svg><span>33°C</span><span class="sky">晴れのちくもり</span></div>
  <div class="tray">
    <button aria-label="隠れているアイコン"><svg viewBox="0 0 12 12"><path d="M1 8l5-5 5 5" fill="none" stroke="#222"/></svg></button>
    <button aria-label="会議"><svg viewBox="0 0 12 12"><path d="M2.500 3.500h5v5h-5zM8 5l2-1v4L8 7M2 1.500h7M3 10.500h6" fill="none" stroke="#222"/></svg></button>
    <button aria-label="同期"><svg viewBox="0 0 14 14"><path d="M1 1l11-.5V11H1zM4 7q0-3 4-3M8 6q0 3-3 2" fill="none" stroke="#333"/><circle cx="11" cy="11" r="3" fill="#2a72c4"/></svg></button>
    <button aria-label="電源"><svg viewBox="0 0 12 12"><path d="M.5 3.500h10v5H.5z" fill="none" stroke="#111"/><path d="M1 4h7v4H1zM11 5h1v2h-1z"/></svg></button>
    <button aria-label="ネットワーク"><svg viewBox="0 0 12 12"><path d="M1 11A10 10 0 0 1 11 1M4 11a7 7 0 0 1 7-7M7 11a4 4 0 0 1 4-4" fill="none" stroke="#555"/><circle cx="10" cy="10" r="1" fill="#333"/></svg></button>
    <button aria-label="音量"><svg viewBox="0 0 12 12"><path d="M1 4.500h2l2.500-2.500v8L3 7.500H1zM7 4.500q1 1.500 0 3M8.500 3.500q2 2.500 0 5M10 2.500q2.500 3.500 0 7" fill="none" stroke="#444"/></svg></button>
    <button aria-label="入力"><svg viewBox="0 0 12 12"><path d="M2 11L6 1l4 10M4 7h4" fill="none" stroke="#999" stroke-width="1.200"/></svg></button>
    <button aria-label="アプリ通知"><svg viewBox="0 0 12 12"><circle cx="5.500" cy="5.500" r="5" fill="#1266d8"/><path d="M8 8h3v3H8z" fill="#e33"/><path d="M7 10h2v2H7z" fill="#fc2"/></svg></button>
  </div>
  <div class="clock"><time>10:52</time><time>2023/08/16</time></div>
  <button class="notice" aria-label="通知"><svg viewBox="0 0 20 20"><path d="M1 1h13v10H7l-3 3v-3H1z" fill="#111"/><path d="M3 4h9M3 6h9M3 8h6" stroke="#ccc"/><circle cx="13" cy="13" r="6" fill="#ddd" stroke="#999"/><text x="13" y="16" text-anchor="middle">9</text></svg></button>
</div>
<script src="palette.js"></script>
</body>
</html>
```
FILE: styles.css
```css
* { box-sizing: border-box; margin: 0; padding: 0; }
:root { --bg: #353535; --panel: #2d2d2d; --deep: #282828; --blue: #15539e; --line: #222; --text: #d4d4d4; }
body {
  min-height: 100vh; display: flex; flex-direction: column; overflow: hidden;
  background: var(--bg); color: var(--text);
  font: 10px/14px "Open Sans", "Noto Sans CJK JP", sans-serif;
  font-feature-settings: "palt";
}
button, input, select, kbd { font: inherit; color: inherit; background: none; border: 0; font-feature-settings: inherit; }
button { display: inline-flex; align-items: center; justify-content: center; white-space: nowrap; }
input { min-width: 0; width: 0; outline: 0; }
svg { width: 11px; height: 11px; flex: none; display: block; }
.defs { position: absolute; width: 0; height: 0; }
i { display: block; }
.on { background: #1b1b1b; border-radius: 3px; }
.raised { background: #3a3a3a; border: 1px solid #242424; border-radius: 3px; }

.titlebar { height: 18px; background: #000; display: flex; align-items: center; padding-left: 2px; flex: none; }
.titlebar h1 { font-size: 9px; font-weight: 400; color: #fff; margin-left: 4px; flex: 1; white-space: nowrap; }
.winbtns { display: flex; padding-right: 2px; }
.winbtns button { width: 37px; height: 18px; }
.winbtns svg { width: 9px; height: 9px; }

.menubar { height: 18px; display: flex; flex: none; font-size: 9px; padding-left: 1px; }
.menubar button { padding: 0 3px; height: 18px; border-top: 2px solid transparent; border-bottom: 2px solid transparent; }
.menubar .open { color: #3a78c8; border-bottom-color: var(--blue); }

.workspace { position: relative; flex: 1; display: flex; flex-direction: column; }
.toolbar { height: 25px; display: flex; align-items: center; flex: none; border-top: 1px solid #303030; white-space: nowrap; }
.tb-left { flex: 0 0 416px; display: flex; align-items: center; padding-left: 1px; }
.tb-left button { width: 20px; height: 20px; }
.vsep { width: 1px; height: 20px; background: #2d2d2d; margin: 0 3px; }
.toolbar label { font-size: 9px; padding: 0 2px; }
.toolbar .mid { width: 22px; }

.spin { display: inline-flex; align-items: center; background: var(--panel); border: 1px solid #262626; border-radius: 3px; height: 20px; }
.spin input { flex: 1; padding-left: 5px; }
.spin button { width: 10px; font-size: 14px; line-height: 14px; color: #eee; }
.spin button:disabled, .bar button:disabled { color: #555; }
.tail { width: 37px; justify-content: flex-end; border-left: 0; }
.dim { width: 80px; }

.drop { position: relative; display: inline-flex; background: #333; border: 1px solid #242424; border-radius: 3px; height: 20px; }
.drop select { appearance: none; width: 100%; padding: 0 16px 0 5px; outline: 0; }
.drop::after, .combo::after { content: ""; border: 3px solid transparent; border-top: 4px solid #eee; border-bottom: 0; }
.drop::after { position: absolute; right: 5px; top: 7px; pointer-events: none; }
.unit { width: 39px; margin-left: 1px; }
.unit select { padding-right: 0; }
.scales { display: flex; margin-left: 6px; gap: 1px; }
.scales svg { width: 10px; height: 10px; }
.scales button, .tb-right button { width: 19px; height: 18px; }
.tb-right { display: flex; gap: 2px; margin: 0 2px 0 auto; }

.main { flex: 1; display: flex; min-height: 0; }
.toolbox { width: 18px; flex: none; display: flex; flex-direction: column; border-right: 1px solid #2d2d2d; }
.toolbox button { height: 17px; }
.toolbox i { height: 1px; background: #2e2e2e; }

.editor { flex: 508; display: grid; grid-template: 15px 1fr 10px / 16px 1fr 14px; min-width: 0; background: var(--bg); }
.ruler-h, .ruler-v, .canvas { width: 100%; height: 100%; }
.ruler-h, .ruler-v { background: #1d1f1f; }
.ruler-h text, .ruler-v text { fill: #aaa; font-size: 9px; }
.canvas { min-height: 0; }
.guide-lock { background: #2d2d2d; }
.guide-lock svg { width: 9px; height: 9px; }
.display { background: #2f2f2f; }
.vscroll { background: #303030; display: flex; justify-content: center; }
.vscroll i { width: 4px; height: 70px; margin-top: 146px; border-radius: 2px; background: #a2a2a0; }
.hscroll { grid-column: 1 / 3; background: #2f2f2f; }

.splitter { width: 7px; flex: none; display: flex; flex-direction: column; align-items: center; justify-content: center; gap: 1px; border-right: 1px solid #252525; }
.splitter i { width: 1px; height: 2px; background: #ddd; }

.dock { flex: 466; display: flex; flex-direction: column; min-width: 0; background: var(--bg); border-right: 1px solid #2a2a2a; margin: 3px 0 0; }
.tabs { display: flex; background: var(--deep); height: 20px; font-size: 9px; padding-left: 4px; flex: none; }
.tabs button { width: 34px; border-bottom: 2px solid transparent; }
.tabs .active { width: 102px; border-color: var(--blue); background: #2f2f2f; }
.tabs b { font-weight: 400; margin-left: 2px; color: #aaa; }
.tabs .more { width: 16px; margin-left: auto; background: #303030; }
.subtabs { display: flex; gap: 2px; background: var(--deep); height: 17px; margin-top: 1px; font-size: 9px; padding-left: 3px; border-top: 1px solid var(--line); flex: none; }
.subtabs button { border-bottom: 2px solid transparent; padding: 0 2px; gap: 1px; }
.subtabs .active { border-color: var(--blue); }
.stroke { flex: 1; background: var(--panel); display: grid; grid-template-columns: 36px 1fr; grid-template-rows: 19px 18px 22px 19px 18px 18px 18px; align-content: start; align-items: center; gap: 3px 0; padding: 4px 0 0 2px; border-bottom: 1px solid var(--line); white-space: nowrap; }
.stroke > label, .stroke > span { font-size: 9px; }
.stroke > div { display: flex; gap: 3px; height: 100%; }
.stroke .spin, .stroke .drop, .stroke .combo { height: 100%; }
.sw { width: 63px; }
.su { width: 57px; }
.so { width: 45px; }
.so input { padding-left: 3px; }
.combo { background: #333; border: 1px solid #242424; border-radius: 3px; justify-content: space-between; padding: 0 4px 0 6px; }
.dash { width: 75px; padding-left: 5px; }
.dash svg { width: 54px; height: 8px; }
.markers .combo { width: 39px; }
.markers svg { width: 20px; height: 13px; }
.opts button { width: 19px; height: 100%; background: #333; border: 1px solid #242424; border-radius: 3px; }
.opts .on { background: #1b1b1b; }
.opts > button svg { width: 14px; height: 14px; }
.stroke .opts { gap: 2px; }
.off { width: 57px; color: #777; }
.opts .spin button { background: none; border: 0; width: 10px; }

.compose { padding: 3px 1px 6px 2px; background: #303030; display: grid; gap: 2px; flex: none; }
.blend { display: flex; justify-content: flex-end; align-items: center; gap: 1px; font-size: 9px; }
.blend .drop { width: 75px; }
.bar { height: 14px; display: flex; align-items: center; background: var(--deep); border: 1px solid var(--line); }
.bar label { flex: 1; padding-left: 2px; line-height: 12px; font-size: 9px; }
.bar input { width: 26px; margin-left: 5px; line-height: 12px; height: 12px; font-size: 9px; }
.bar button { width: 9px; height: 12px; font-size: 12px; line-height: 10px; color: #eee; }
.bar.full label { background: var(--blue); }

.commands { width: 26px; flex: none; display: flex; flex-direction: column; padding: 3px 0 2px; }
.commands button { height: 18px; padding-left: 2px; }
.commands svg { width: 10px; height: 10px; }
.commands i { height: 1px; background: #2d2d2d; margin: 4px; }
.commands .expand { margin-top: auto; }

.popup { position: absolute; left: 169px; top: 0; bottom: 0; width: 248px; background: #2f2f2f; border: 1px solid #222; border-bottom: 0; display: flex; flex-direction: column; font-size: 9px; }
.popup button { flex: 1; min-height: 0; justify-content: flex-start; padding: 0 5px 0 15px; }
.popup kbd { margin-left: auto; color: #8c8c8c; font-size: 9px; }
.popup hr { border: 0; height: 1px; background: #292929; }
.popup .hover { background: var(--blue); color: #fff; }
.popup .hover kbd { color: #9bb8dc; }
.popup .ic { padding-left: 2px; gap: 3px; }
.popup .ic svg { width: 9px; height: 9px; }
.popup .sub::after { content: ""; margin-left: auto; border: 3px solid transparent; border-left: 4px solid #eee; border-right: 0; }
.cursor { position: absolute; left: 237px; top: 30px; width: 10px; height: 16px; }

.palette { height: 20px; flex: none; display: flex; }
.none { width: 18px; height: 18px; background: #fff; }
.none svg { width: 18px; height: 18px; }
.swatches { flex: 1; display: flex; height: 9px; align-self: flex-start; margin: 9px 0 0 1px; }
.swatches button { flex: 1; min-width: 0; border-right: 1px solid rgba(40, 40, 40, .5); }
.swatches .pin::before { content: ""; width: 5px; height: 5px; border: 1px solid #ccc; border-radius: 50%; }
.palbtns { display: flex; width: 44px; padding-top: 2px; }
.palbtns button { width: 16px; height: 16px; }
.palbtns button:last-child { width: 12px; }

.status { height: 26px; flex: none; display: flex; align-items: center; white-space: nowrap; }
.style-lab { width: 45px; display: flex; flex-direction: column; align-items: flex-end; font-size: 9px; line-height: 13px; }
.style-sw { width: 27px; margin-left: 1px; align-self: stretch; display: grid; gap: 1px; }
.f { background: #62d48a; }
.s { background: #000; }
.width { align-self: flex-end; width: 23px; padding-left: 4px; line-height: 12px; font-size: 9px; }
.status .spin { height: 25px; }
.status .o { width: 41px; }
.status .o input { padding-left: 3px; font-size: 9px; }
.layer { border-left: 2px solid #2d6bcb; height: 14px; margin-left: 7px; padding-left: 3px; font-size: 9px; }
.status > button + button { width: 20px; }
.layer + button { margin-left: 4px; }
.status p { flex: 1; font-size: 9px; padding-left: 4px; overflow: hidden; min-width: 0; }
.status dl { display: grid; grid-template-columns: 16px 26px; line-height: 13px; width: 48px; text-align: right; font-size: 9px; }
.status dt { text-align: left; }
.status .z { width: 59px; }
.status .z input, .status .r input { font-size: 9px; }
.status .rl { margin: 0 0 0 7px; }
.status .r { width: 64px; margin-right: 10px; }
.status .r input { padding-left: 9px; }
.status .z button, .status .r button { width: 12px; }

.taskbar { height: 32px; flex: none; display: flex; align-items: center; color: #222; background: linear-gradient(90deg, #e3dabb 0, #e0ddc0 30%, #d8dccd 45%, #c5e0df 55%, #d2e1ee 66%, #d0e5df 75%, #bee5cd 80%, #d4e3e2 88%, #cfe0cf 100%); white-space: nowrap; }
.start { width: 39px; height: 32px; }
.start svg { width: 13px; height: 13px; }
.search { width: 230px; height: 31px; background: #fff; display: flex; align-items: center; padding-left: 9px; }
.mag { width: 14px; height: 14px; }
.search input { flex: 1; margin-left: 9px; font-size: 11px; line-height: 18px; }
.search input::placeholder { color: #333; opacity: 1; }
.art { width: 64px; height: 31px; }
.apps { display: flex; }
.apps button { width: 40px; height: 32px; border-bottom: 2px solid transparent; }
.apps svg { width: 18px; height: 18px; }
.apps button:first-child svg { width: 14px; height: 14px; }
.apps .cur { background: #f0f1ec; border-color: #1878d0; }
.apps .run { border-color: #1878d0; background: linear-gradient(#e0e3d5, #d8e0d5); width: 36px; margin-left: 2px; }
.dell { font: bold 6px "Liberation Sans", sans-serif; }
.badge { font-size: 7px; fill: #fff; }
.weather { margin-left: auto; display: flex; align-items: center; gap: 6px; font-size: 11px; }
.weather svg { width: 18px; height: 18px; }
.sky { font-size: 10px; }
.tray { display: flex; margin-left: 17px; }
.tray button { width: 19px; height: 32px; }
.tray svg { width: 12px; height: 12px; }
.clock { width: 70px; display: flex; flex-direction: column; text-align: center; line-height: 15px; font-size: 9px; }
.notice { width: 28px; margin-right: 10px; }
.notice svg { width: 20px; height: 20px; }
.notice text { font-size: 9px; }
```
FILE: palette.js
```js
const colors = [
  '000000 1a1a1a 333333 4d4d4d 666666 808080 999999 b3b3b3 cccccc e6e6e6 ececec f2f2f2 f9f9f9 ffffff',
  '800000 ff0000 808000 ffff00 008000 00ff00 008080 00ffff 000080 0000ff 800080 ff00ff',
  '2b0000 550000 800000 aa0000 d40000 ff0000 ff2a2a ff5555 ff8080 ffaaaa ffd5d5',
  '280b0b 501616 782121 a02c2c c83737 d35f5f de8787 e9afaf f4d7d7',
  '241c1c 483737 6c5353 916f6f ac9393 c8b7b7 e3dbdb',
  '2b1100 552200 803300 aa4400 d45500 ff6600 ff7f2a ff9955 ffb380 ffccaa ffe6d5',
  '28170b 502d16 784421 a05a2c c87137 d38d5f deaa87 e9c6af f4e3d7',
  '241f1c 483e37 6c5d53 917c6f ac9d93 c8beb7 e3dedb',
  '2b2200 554400 806600 aa8800 d4aa00 ffcc00 ffd42a ffdd55 ffe680 ffeeaa fff6d5',
  '28220b 504416 786721 a0892c c8ab37 d3bc5f decd87 e9ddaf f4eed7',
  '24221c 484537 6c6753 918a6f aca793 c8c4b7'
].join(' ').split(' ');
const box = document.getElementById('swatches');
colors.forEach((c, i) => {
  const b = document.createElement('button');
  b.style.background = '#' + c;
  b.setAttribute('aria-label', '#' + c);
  if (i === 0) b.className = 'pin';
  box.append(b);
});
```
